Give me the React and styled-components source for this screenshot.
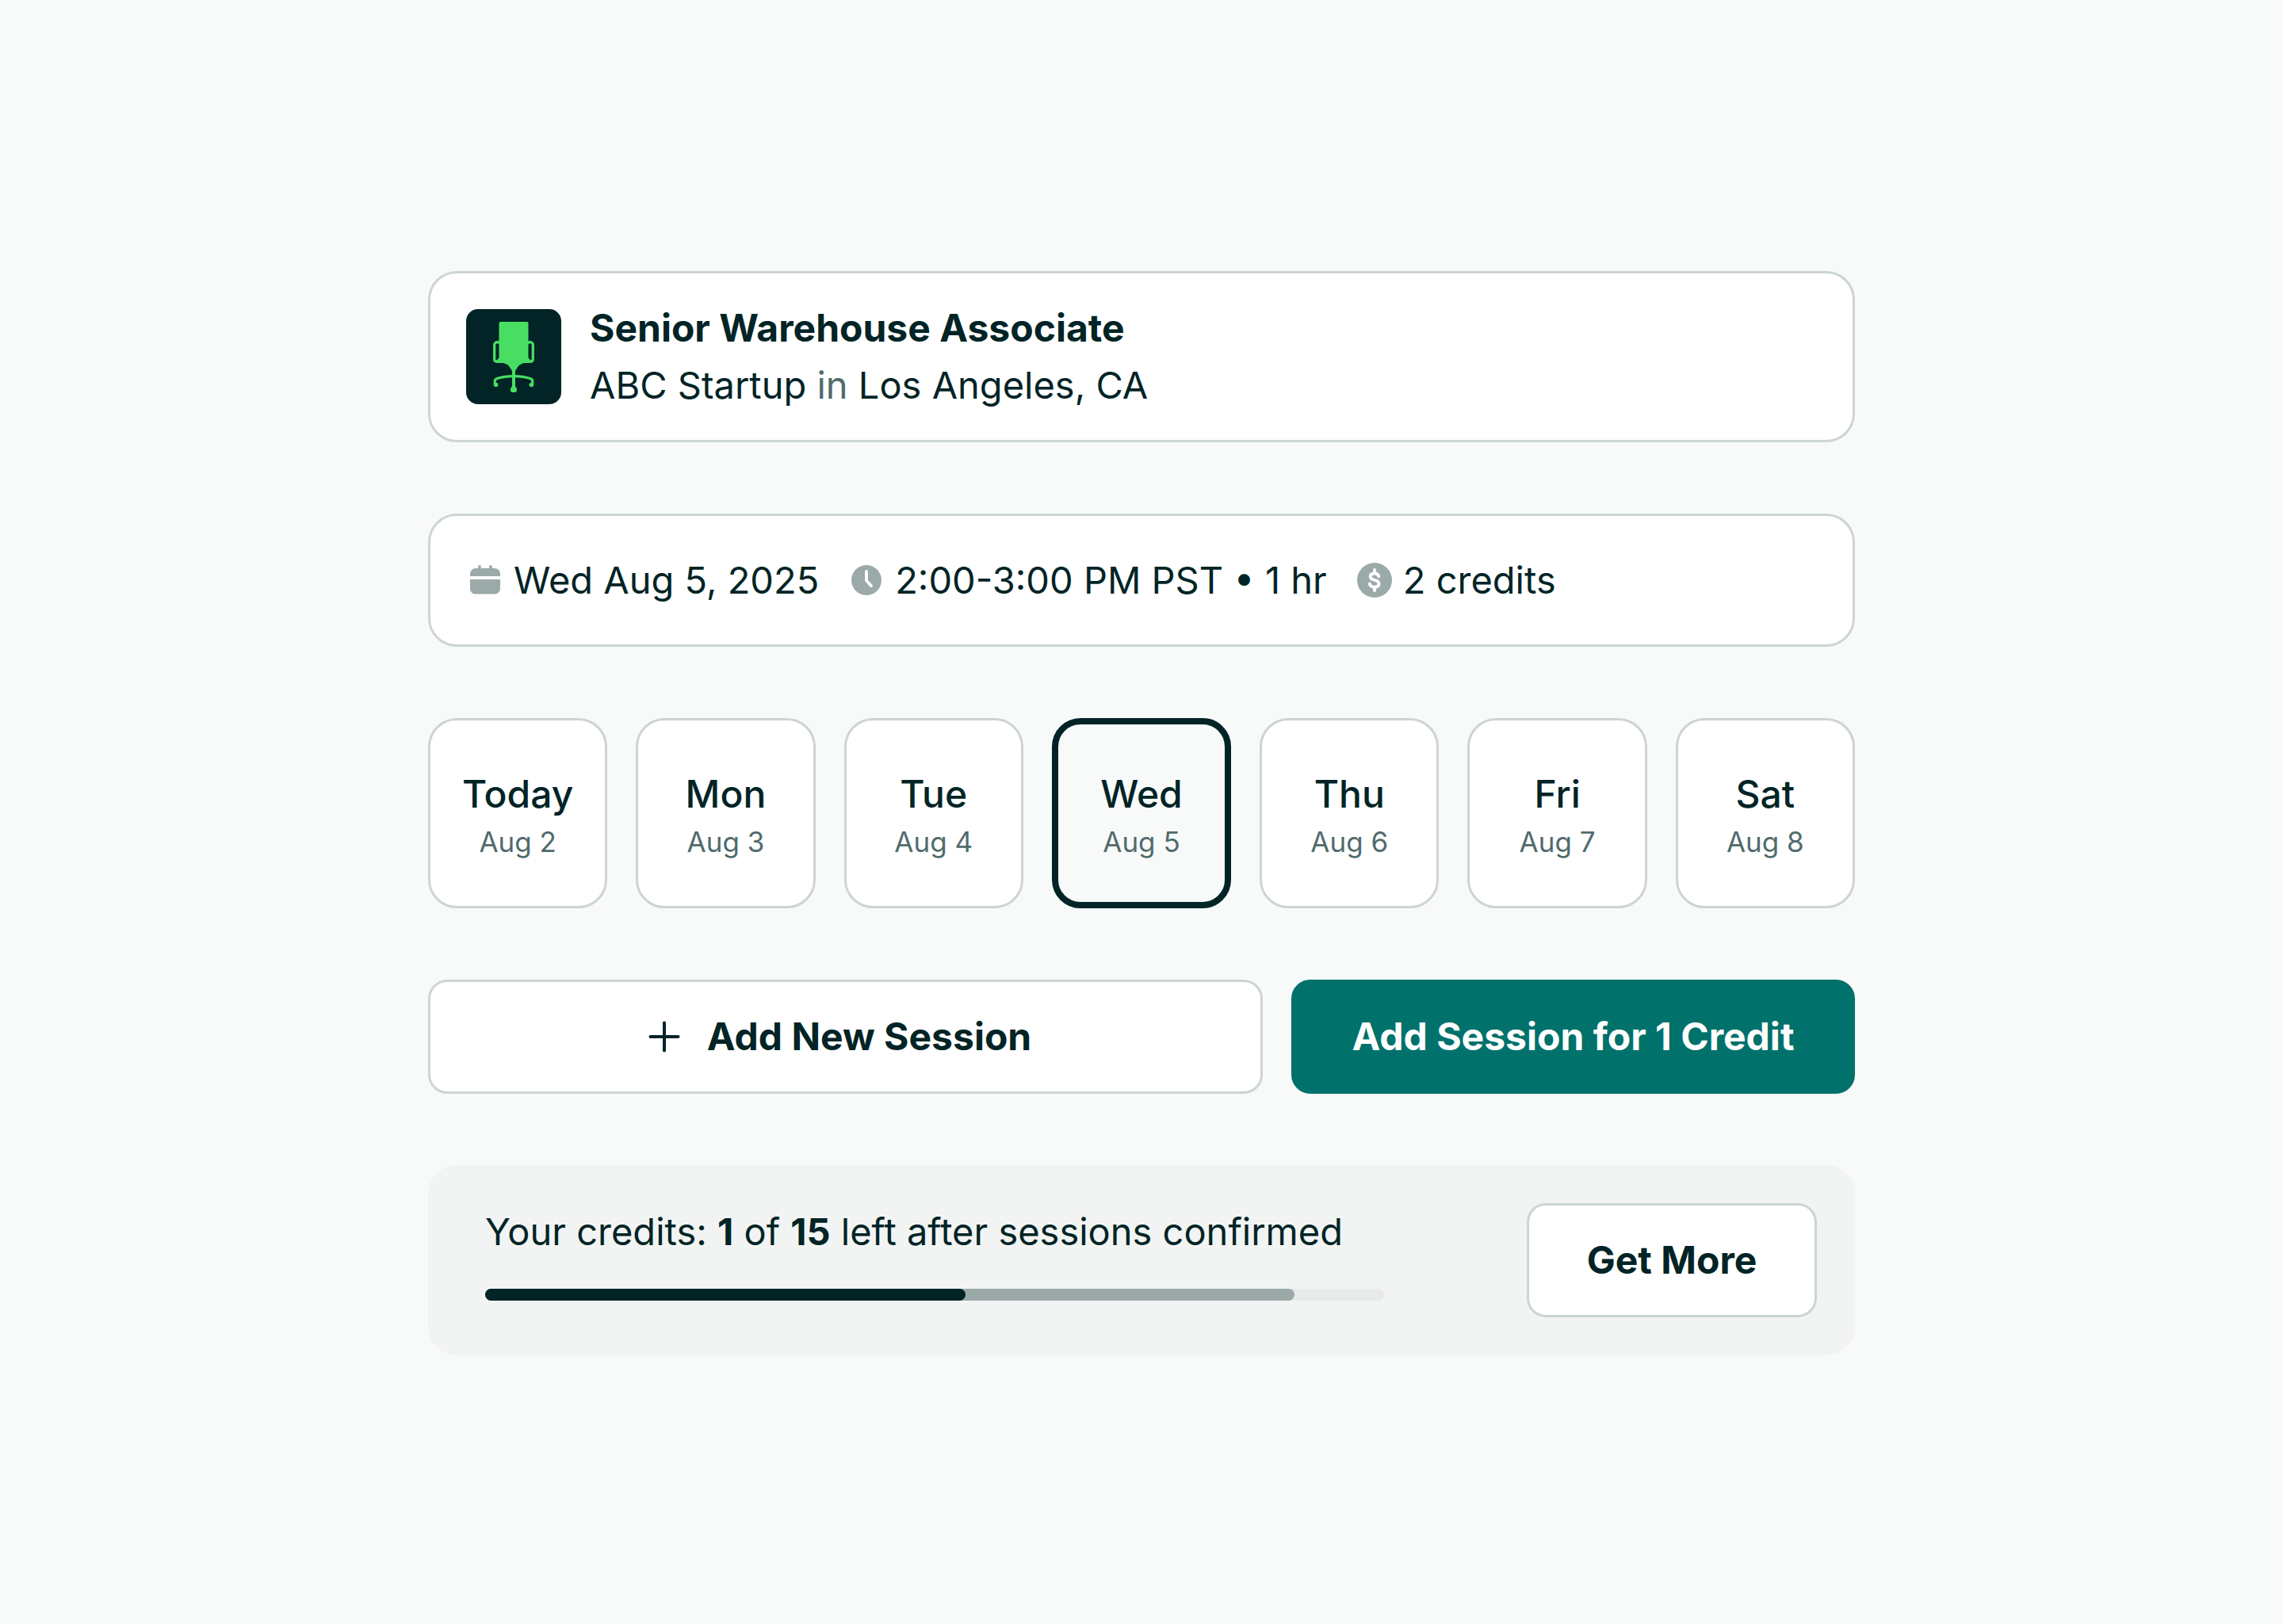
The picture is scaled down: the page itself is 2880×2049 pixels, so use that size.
import React, { useState } from "react";
import styled, { createGlobalStyle } from "styled-components";

const days = [
  { name: "Today", date: "Aug 2" },
  { name: "Mon", date: "Aug 3" },
  { name: "Tue", date: "Aug 4" },
  { name: "Wed", date: "Aug 5" },
  { name: "Thu", date: "Aug 6" },
  { name: "Fri", date: "Aug 7" },
  { name: "Sat", date: "Aug 8" },
];

// share of the track, in percent
const usage = { confirmed: 53.4, pending: 90 };

const ChairLogo = () => (
  <Logo viewBox="0 0 120 120" aria-hidden="true">
    <rect width="120" height="120" rx="15" fill="#022426" />
    <path
      d="M43.5 16h33c1.2 0 2 .8 2 2v44l4 6h-9.500c-4 1-7 3-8.500 6l-2.500 4v21h-4V78l-2.500-4c-1.500-3-4.500-5-8.500-6H37.500l4-6V18c0-1.200.8-2 2-2z"
      fill="#48de62"
    />
    <path
      d="M43 42.500h-1.500c-1-1.200-2.200-1.200-3.500-.6-1.600.7-2.300 1.700-2.300 3.400V63c0 2 1 3.200 3.300 3.200l5-4.500M77 42.500h1.500c1-1.200 2.200-1.200 3.500-.6 1.600.7 2.300 1.700 2.300 3.400V63c0 2-1 3.200-3.300 3.200l-5-4.500"
      fill="none"
      stroke="#48de62"
      strokeWidth="3.300"
    />
    <path
      d="M36.300 95v-4.500c0-1.500 1-2.300 3-3 6-2 13-2.900 20.700-2.900s14.700.9 20.700 2.900c2 .7 3 1.500 3 3V95"
      fill="none"
      stroke="#48de62"
      strokeWidth="3.200"
    />
    <circle cx="37.600" cy="95.500" r="2.800" fill="#48de62" />
    <circle cx="82.400" cy="95.500" r="2.800" fill="#48de62" />
    <path d="M58 97.500h4c1.500 1 2 2.500 2 5 0 1.500-1 2.500-2.500 2.500h-3c-1.500 0-2.500-1-2.500-2.500 0-2.500.5-4 2-5z" fill="#48de62" />
  </Logo>
);

const CalendarIcon = () => (
  <Icon viewBox="0 0 48 48" aria-hidden="true">
    <path
      d="M17 5c1 0 1.800.8 1.800 1.800V9h10.400V6.800a1.800 1.800 0 0 1 3.600 0V9H36a7 7 0 0 1 7 7v3H5v-3a7 7 0 0 1 7-7h3.200V6.800C15.200 5.800 16 5 17 5zM5 23h38v12a6.500 6.500 0 0 1-6.500 6.500h-25A6.500 6.500 0 0 1 5 35z"
      fill="#9baaa9"
    />
  </Icon>
);

const ClockIcon = () => (
  <Icon viewBox="0 0 48 48" aria-hidden="true">
    <circle cx="24" cy="24" r="19" fill="#9baaa9" />
    <path d="M24 13v11.500l6 6.500" fill="none" stroke="#fff" strokeWidth="3.800" strokeLinecap="round" strokeLinejoin="round" />
  </Icon>
);

const DollarIcon = () => (
  <Icon viewBox="0 0 48 48" aria-hidden="true">
    <circle cx="24" cy="24" r="22" fill="#9baaa9" />
    <path
      d="M24 11v4M24 33v4M29.300 19.300c-.8-2.800-2.800-3.900-5.300-3.900-3.300 0-5.300 1.600-5.300 4.100 0 2.700 2.200 3.600 5.300 4.400 3.200.8 5.500 1.900 5.500 4.700 0 2.700-2.300 4.100-5.500 4.100-3.200 0-5.500-1.400-6.200-4.100"
      fill="none"
      stroke="#fff"
      strokeWidth="4"
      strokeLinecap="round"
    />
  </Icon>
);

const PlusIcon = () => (
  <Icon viewBox="0 0 48 48" aria-hidden="true">
    <path d="M24 6.500v35M6.500 24h35" stroke="#022426" strokeWidth="4" strokeLinecap="round" />
  </Icon>
);

const App = () => {
  const [selected, setSelected] = useState("Wed");

  return (
    <>
      <GlobalStyle />
      <Page>
        <JobCard>
          <ChairLogo />
          <div>
            <Title>Senior Warehouse Associate</Title>
            <Text>
              ABC Startup <Muted>in</Muted> Los Angeles, CA
            </Text>
          </div>
        </JobCard>

        <DetailsCard>
          <Detail>
            <CalendarIcon />
            Wed Aug 5, 2025
          </Detail>
          <Detail>
            <ClockIcon />
            2:00-3:00 PM PST • 1 hr
          </Detail>
          <Detail>
            <DollarIcon />
            2 credits
          </Detail>
        </DetailsCard>

        <Days>
          {days.map((day) => (
            <Day
              key={day.name}
              type="button"
              $selected={day.name === selected}
              aria-pressed={day.name === selected}
              onClick={() => setSelected(day.name)}
            >
              <DayName>{day.name}</DayName>
              <DayDate>{day.date}</DayDate>
            </Day>
          ))}
        </Days>

        <Actions>
          <AddButton type="button">
            <PlusIcon />
            Add New Session
          </AddButton>
          <PrimaryButton type="button">Add Session for 1 Credit</PrimaryButton>
        </Actions>

        <Credits>
          <Usage>
            <Text id="credits-label">
              Your credits: <b>1</b> of <b>15</b> left after sessions confirmed
            </Text>
            <Track role="progressbar" aria-labelledby="credits-label" aria-valuenow={14} aria-valuemin={0} aria-valuemax={15}>
              <Fill $color="#9baaa9" style={{ width: `${usage.pending}%` }}>
                <Fill $color="#022426" style={{ width: `${(usage.confirmed / usage.pending) * 100}%` }} />
              </Fill>
            </Track>
          </Usage>
          <Button type="button">Get More</Button>
        </Credits>
      </Page>
    </>
  );
};
export default App;

const GlobalStyle = createGlobalStyle`
  * {
    box-sizing: border-box;
  }
  body {
    margin: 0;
    background: #f8faf9;
    color: #022426;
    font-family: Inter, "Liberation Sans", sans-serif;
    font-size: 47px;
    line-height: 72px;
  }
  button {
    font: inherit;
    color: inherit;
    cursor: pointer;
  }
`;
const Page = styled.main`
  max-width: 1800px;
  margin: 0 auto;
  padding: 342px 0 339px;
  display: flex;
  flex-direction: column;
  gap: 90px;
`;
const Card = styled.section`
  display: flex;
  align-items: center;
  gap: 36px;
  background: #fff;
  border: 3px solid #ccd5d3;
  border-radius: 36px;
`;
const JobCard = styled(Card)`
  padding: 33px 45px;
`;
const DetailsCard = styled(Card)`
  padding: 45px;
`;
const Logo = styled.svg`
  width: 120px;
  height: 120px;
  flex: none;
`;
const Icon = styled.svg`
  width: 48px;
  height: 48px;
  flex: none;
`;
const Title = styled.h1`
  margin: 0;
  font-size: 48px;
  font-weight: 700;
`;
const Text = styled.p`
  margin: 0;
`;
const Muted = styled.span`
  color: #506b6d;
`;
const Detail = styled.span`
  display: flex;
  align-items: center;
  gap: 12px;
  white-space: nowrap;
`;
const Days = styled.div`
  display: grid;
  grid-template-columns: repeat(7, 1fr);
  gap: 36px;
`;
const Day = styled.button`
  display: flex;
  flex-direction: column;
  align-items: center;
  justify-content: center;
  height: 240px;
  padding: 0;
  background: ${(props) => (props.$selected ? "#f8faf9" : "#fff")};
  border: ${(props) => (props.$selected ? "8px solid #022426" : "3px solid #ccd5d3")};
  border-radius: 36px;
`;
const DayName = styled.span`
  font-size: 48px;
  font-weight: 500;
`;
const DayDate = styled.span`
  font-size: 35px;
  line-height: 48px;
  color: #506b6d;
`;
const Actions = styled.div`
  display: flex;
  gap: 36px;
`;
const Button = styled.button`
  display: flex;
  align-items: center;
  justify-content: center;
  min-width: 366px;
  padding: 33px 45px;
  background: #fff;
  border: 3px solid #ccd5d3;
  border-radius: 24px;
  font-size: 48px;
  font-weight: 700;
  white-space: nowrap;
`;
const AddButton = styled(Button)`
  flex: 1;
  gap: 30px;
  padding-right: 63px;
`;
const PrimaryButton = styled(Button)`
  min-width: 711px;
  background: #00716b;
  border-color: #00716b;
  color: #fff;
`;
const Credits = styled.section`
  display: flex;
  align-items: flex-start;
  gap: 180px;
  padding: 48px 48px 48px 72px;
  background: #f2f4f3;
  border-radius: 36px;
`;
const Usage = styled.div`
  flex: 1;
`;
const Track = styled.div`
  height: 15px;
  margin-top: 36px;
  background: #e7eae9;
  border-radius: 8px;
`;
const Fill = styled.div`
  height: 100%;
  background: ${(props) => props.$color};
  border-radius: 8px;
`;
